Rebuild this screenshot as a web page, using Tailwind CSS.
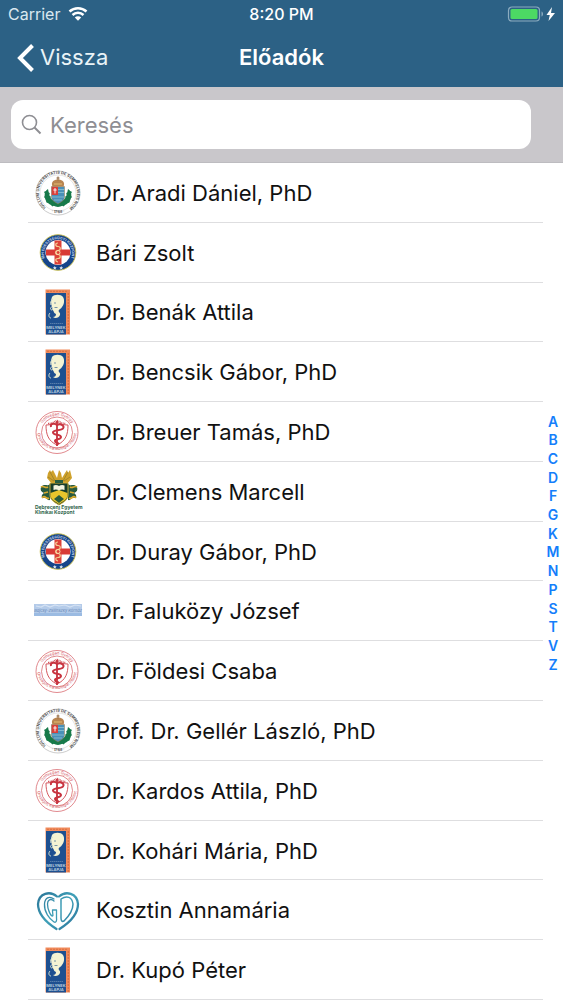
<!DOCTYPE html>
<html lang="hu">
<head>
<meta charset="utf-8">
<meta name="viewport" content="width=device-width, initial-scale=1">
<title>Előadók</title>
<script src="https://cdn.jsdelivr.net/npm/@tailwindcss/browser@4"></script>
</head>
<body class="flex min-h-screen flex-col bg-white font-['Inter','Liberation_Sans',sans-serif] text-[#111]">

<!-- Shared institution logos -->
<svg class="absolute size-0" aria-hidden="true">
  <defs>
    <path id="ring-outer" d="M18.500 45A19 19 0 1 1 41.500 45"/>
    <path id="ring-foot" d="M19 47A20.500 20.500 0 0 0 41 47"/>
    <path id="ring-blue" d="M17.500 36.500A14 14 0 1 1 42.500 36.500"/>
    <path id="ring-red-top" d="M11.500 30A17.500 17.500 0 0 1 46.500 30"/>
    <path id="ring-red-bottom" d="M9 27A20 20 0 0 0 49 27"/>
    <linearGradient id="heart-fill" gradientUnits="userSpaceOnUse" x1="10" y1="10" x2="50" y2="50">
      <stop offset="0" stop-color="#2a7396"/><stop offset=".5" stop-color="#3fa0b8"/><stop offset="1" stop-color="#2a6f98"/>
    </linearGradient>
  </defs>

  <symbol id="university" viewBox="0 0 60 60">
    <circle cx="30" cy="30" r="22" fill="#fff" stroke="#aaa" stroke-width=".6"/>
    <circle cx="30" cy="30" r="18" fill="none" stroke="#bbb" stroke-width=".4"/>
    <text font-size="4" font-weight="700" fill="#555"><textPath href="#ring-outer" startOffset="50%" text-anchor="middle">SIGILLUM UNIVERSITATIS DE SEMMELWEIS NOM.</textPath></text>
    <text font-size="4" font-weight="700" fill="#555"><textPath href="#ring-foot" startOffset="50%" text-anchor="middle">· 1769 ·</textPath></text>
    <path d="M20 26c-5 3-4 11 0 14 3 3 7 3 10 4 3-1 7-1 10-4 4-3 5-11 0-14-1 5-2 10-5 11-2 2-8 2-10 0-3-1-4-6-5-11z" fill="#177a4a"/>
    <path d="M16.500 29l5 2M16.500 34l6 0M18.500 39l5-2M24 43l3-4M43.500 29l-5 2M43.500 34l-6 0M41.500 39l-5-2M36 43l-3-4" stroke="#177a4a" stroke-width="2"/>
    <path d="M23.500 23.500h13v10.500c0 4-4 5-6.500 7-2.500-2-6.500-3-6.500-7z" fill="#4a90b8" stroke="#a47a45" stroke-width=".5"/>
    <path d="M23.700 23.700H30v8.300h-6.300z" fill="#d8403a"/>
    <path d="M27 25v5.500M25.300 27h3.400" stroke="#fff" stroke-width=".9"/>
    <path d="M30 26.500h6.300M30 29.500h6.300M24 34h12M26 37h8" stroke="#86bdd2" stroke-width=".9"/>
    <path d="M24.500 23.500c-2-4.500 1.500-7 5.500-7s7.500 2.500 5.500 7z" fill="#b98550"/>
    <path d="M30 13.500v4M28.500 15h3" stroke="#8f643a" stroke-width="1"/>
    <path d="M26 21h8" stroke="#e4bd72" stroke-width="1"/>
  </symbol>

  <symbol id="military" viewBox="0 0 60 60">
    <circle cx="30" cy="29.500" r="17.800" fill="#16458a" stroke="#c9bd4a" stroke-width=".9"/>
    <circle cx="30" cy="29.500" r="12.500" fill="#fff"/>
    <path d="M18 26.500h24v6H18z" fill="#d83a36"/>
    <path d="M26.500 17.500h7v24h-7z" fill="#dc4138"/>
    <path d="M30 20c-3 0-3 3.500 0 3.500s3 4 0 4-3 4 0 4 3 4 0 4-3 3 0 3.500" fill="none" stroke="#f4cf94" stroke-width="1.200"/>
    <circle cx="30" cy="29.500" r="2" fill="none" stroke="#f8dfae" stroke-width=".9"/>
    <text font-size="3.600" font-weight="700" fill="#c5d4e8"><textPath href="#ring-blue" startOffset="50%" text-anchor="middle">MH EGÉSZSÉGÜGYI KÖZPONT</textPath></text>
    <path d="M26.800 43l.6 1.200 1.300.1-1 1 .3 1.300-1.200-.7-1.200.7.3-1.300-1-1 1.300-.1zM33.200 43l.6 1.200 1.300.1-1 1 .3 1.300-1.200-.7-1.200.7.3-1.300-1-1 1.300-.1z" fill="#dce7f5"/>
  </symbol>

  <symbol id="society" viewBox="0 0 60 60">
    <path d="M17.500 6.500h24.500v45H17.500z" fill="#f28b5c"/>
    <path d="M18 10H38v41.500H18z" fill="#1e5090"/>
    <path d="M40.200 10v41" stroke="#d2693d" stroke-width="1" stroke-dasharray="2 1"/>
    <path d="M19 8.300h21" stroke="#d2693d" stroke-width=".8" stroke-dasharray="2 1"/>
    <path d="M24 14c2-3 9-3 11 0 2 3 1 8-1 10-1 2-3 2-3.500 4 1 2 2 2 1.500 4-1 3-5 4-7 2 2 0 3-1 3-3-3-1-1.500-3-3.500-4-1-1 .5-2-.5-3-1-3-1.500-7 0-10z" fill="#f4f3d3"/>
    <path d="M25 16c-2 1-3 4-2 6M24 24c-2 0-2 3 0 3M22 30c-2 2-1 5 1 5" stroke="#d8e2d0" stroke-width="1" fill="none"/>
    <path d="M26 20h2M26.500 24.500h3" stroke="#6688a0" stroke-width=".9"/>
    <path d="M22 40.500h13" stroke="#6e91b8" stroke-width=".7" stroke-dasharray="1.500 .5"/>
    <text x="28" y="45.500" font-size="4" font-weight="700" text-anchor="middle" fill="#b7cbdc">MELYNEK</text>
    <text x="28" y="49.500" font-size="4" font-weight="700" text-anchor="middle" fill="#b7cbdc">ALAPJA</text>
  </symbol>

  <symbol id="cardiology" viewBox="0 0 60 60">
    <g fill="none" stroke="#d4575f">
      <circle cx="29" cy="29.500" r="21" stroke-width=".7"/>
      <circle cx="29" cy="29.500" r="15.500" stroke-width=".7"/>
      <path d="M18 22c4 0 8-1 11-3 3 2 7 3 11 3 0 9-2 16-11 20-9-4-11-11-11-20z" stroke-width="1"/>
      <path d="M20 20.500c5 0 6-2 9-3 3 1 4 3 9 3" stroke-width="1.500" stroke-dasharray="1 .6"/>
      <path d="M29 18v25" stroke="#c5303d" stroke-width="1.800"/>
      <path d="M23 24c-1-4 4-4 6-2 4-2 8 1 6 3.500-2 2.500-10 1-10 4s8 1.500 8 4.500-6 1.500-6 4 3 1 4 3" stroke="#c8333f" stroke-width="2"/>
    </g>
    <text font-size="4" fill="#d4575f"><textPath href="#ring-red-top" startOffset="50%" text-anchor="middle">Gottsegen György</textPath></text>
    <text font-size="4" fill="#d4575f"><textPath href="#ring-red-bottom" startOffset="50%" text-anchor="middle">Országos Kardiológiai Intézet</textPath></text>
  </symbol>

  <symbol id="debrecen" viewBox="0 0 60 60">
    <path d="M31 8l2 3 1 5 3-5 2-3 1 3 2-3 1 4 1 4-5 6H24l-5-6 1-5 2-3 1 2 2-2 2 4 2 4z" fill="#cfa12b"/>
    <path d="M22 10l5 9M40 10l-5 9M20 15l6 4M42 15l-6 4" stroke="#8f7a2a" stroke-width=".7"/>
    <path d="M13 25c4-4 6 0 9-3v16c-3 1-3-3-6-2-4 0-2-4 0-5-3-1-4-3-3-6zM49 25c-4-4-6 0-9-3v16c3 1 3-3 6-2 4 0 2-4 0-5 3-1 4-3 3-6z" fill="#285b3f"/>
    <path d="M13 25c3-2 4 2 7 0M14 36c3-4 4 2 7 0M49 25c-3-2-4 2-7 0M48 36c-3-4-4 2-7 0M16 31l4-1M46 31l-4-1" stroke="#d9a92e" stroke-width="1.700" fill="none"/>
    <path d="M22 21h18v12c0 5-4 7-9 10-5-3-9-5-9-10z" fill="#183e2b" stroke="#d9b33d" stroke-width=".9"/>
    <path d="M22.500 31l8.500-3 8.500 3v3c-1 4-4 5-8.500 8-4.500-3-7.500-4-8.500-8z" fill="#e8c52c"/>
    <path d="M26 37l5-4 5 4-5 4z" fill="#285b3f"/>
    <path d="M25.500 23.500c2-1 4-.5 5.500.5 1.500-1 3.500-1.500 5.500-.5v4.500c-2-1-4-.5-5.500.5-1.500-1-3.500-1.500-5.500-.5z" fill="#f3f3df"/>
    <path d="M27 18h8v3h-8z" fill="#275d40"/>
    <text x="7" y="46.500" font-size="5" font-weight="700" fill="#2e634b">Debreceni Egyetem</text>
    <text x="7" y="51.500" font-size="5" font-weight="700" fill="#2e634b">Klinikai Központ</text>
  </symbol>

  <symbol id="banner" viewBox="0 0 60 60">
    <path d="M6 22h48v12H6z" fill="#b4cbe9"/>
    <path d="M6 31h48v3H6z" fill="#9bbbe2"/>
    <path d="M8 24l5 1 4-2 5 2 5-2 4 1 6-1 5 2 5-2 6 1" stroke="#d5e2f3" stroke-width="1.200" fill="none"/>
    <text x="30" y="30" font-size="4" font-style="italic" text-anchor="middle" fill="#6486b5">Bajcsy-Zsilinszky Kórház</text>
  </symbol>

  <symbol id="heart" viewBox="0 0 60 60">
    <g fill="none" stroke="url(#heart-fill)" stroke-linecap="round" stroke-linejoin="round">
      <path d="M29 15.500C22 9.500 11 12 10 23c0 10 9 19 18.500 25" stroke-width="2.300"/>
      <path d="M31 15.500C38 9.500 49 12 50 23c0 10-9 19-18.500 25" stroke-width="2.300"/>
      <path d="M26 18c-5-3.500-9-1-9.500 5-.5 8 5 15 9.500 18 2 1 3-1 2.500-4v-8h-4c0 4 1 6 0 6-2 0-5-7-5-12 0-4 3-6 6.500-3" stroke-width="1.300"/>
      <path d="M33 18c6-4 11-2 12 5 0 7-4 12-9 17-2 1-3 0-3-3z" stroke-width="1.500"/>
    </g>
  </symbol>
</svg>

<header class="bg-[#2c6185] text-white">
  <div class="grid h-7 grid-cols-3 items-center px-2 text-base">
    <div class="flex items-center gap-2 text-[#d9e8f0]">
      <span>Carrier</span>
      <svg class="h-4 w-5" viewBox="0 0 20 16" aria-label="Wi-Fi" role="img"><g fill="none" stroke="#fff" stroke-width="2.500"><path d="M1.500 5.500a12.500 12.500 0 0 1 17 0M4.500 9a8 8 0 0 1 11 0"/></g><path d="M6.800 11.500a4.500 4.500 0 0 1 6.400 0L10 14.800z" fill="#fff"/></svg>
    </div>
    <time class="text-center font-medium whitespace-nowrap">8:20 PM</time>
    <svg class="h-4 w-12 justify-self-end" viewBox="0 0 48 16" aria-label="Akkumulátor, töltés alatt" role="img">
      <rect x="1.500" y="1" width="31" height="14" rx="3.500" fill="none" stroke="#8cacc0" stroke-width="1.200"/>
      <rect x="3.500" y="3" width="27" height="10" rx="1.500" fill="#4cd964"/>
      <path d="M34.500 5.500c2 .5 2 4.500 0 5z" fill="#8cacc0"/>
      <path d="M45 1L39.500 9h3.300l-1.300 6L48 7h-4z" fill="#fff"/>
    </svg>
  </div>
  <div class="grid h-[59px] grid-cols-3 items-center px-4">
    <a href="#" class="flex items-center gap-1 text-[22px] text-[#e9f3f7]">
      <svg class="h-8 w-5" viewBox="0 0 20 32" aria-hidden="true"><path d="M16.500 3.500L4 16l12.500 12.500" fill="none" stroke="#fff" stroke-width="4"/></svg>
      Vissza
    </a>
    <h1 class="text-center text-[22px] font-semibold">Előadók</h1>
  </div>
</header>

<form role="search" class="h-[76px] border-b border-[#bdbcc0] bg-[#c9c7cb] pt-[13px] pr-8 pl-[11px]">
  <div class="flex h-[49px] items-center gap-2 rounded-xl bg-white px-[10px]">
    <svg class="size-[21px] shrink-0" viewBox="0 0 21 21" aria-hidden="true"><g fill="none" stroke="#8e8e93" stroke-width="1.600"><circle cx="8.500" cy="8.500" r="7"/><path d="M13.500 13.500l6 6" stroke-width="2"/></g></svg>
    <input type="search" aria-label="Keresés" placeholder="Keresés" class="h-10 min-w-0 flex-1 bg-transparent text-[22px] outline-none placeholder:text-[#8e8e93]">
  </div>
</form>

<main class="flex flex-1">
  <ul class="ml-7 grid min-w-0 flex-1 auto-rows-fr text-[22px]">
    <li class="flex min-h-[59px] items-center gap-2 border-b border-[#dedee0] pt-0.5"><svg class="-my-1 size-[60px] shrink-0" aria-hidden="true"><use href="#university"/></svg>Dr. Aradi Dániel, PhD</li>
    <li class="flex min-h-[59px] items-center gap-2 border-b border-[#dedee0] pt-0.5"><svg class="-my-1 size-[60px] shrink-0" aria-hidden="true"><use href="#military"/></svg>Bári Zsolt</li>
    <li class="flex min-h-[59px] items-center gap-2 border-b border-[#dedee0] pt-0.5"><svg class="-my-1 size-[60px] shrink-0" aria-hidden="true"><use href="#society"/></svg>Dr. Benák Attila</li>
    <li class="flex min-h-[59px] items-center gap-2 border-b border-[#dedee0] pt-0.5"><svg class="-my-1 size-[60px] shrink-0" aria-hidden="true"><use href="#society"/></svg>Dr. Bencsik Gábor, PhD</li>
    <li class="flex min-h-[59px] items-center gap-2 border-b border-[#dedee0] pt-0.5"><svg class="-my-1 size-[60px] shrink-0" aria-hidden="true"><use href="#cardiology"/></svg>Dr. Breuer Tamás, PhD</li>
    <li class="flex min-h-[59px] items-center gap-2 border-b border-[#dedee0] pt-0.5"><svg class="-my-1 size-[60px] shrink-0" aria-hidden="true"><use href="#debrecen"/></svg>Dr. Clemens Marcell</li>
    <li class="flex min-h-[59px] items-center gap-2 border-b border-[#dedee0] pt-0.5"><svg class="-my-1 size-[60px] shrink-0" aria-hidden="true"><use href="#military"/></svg>Dr. Duray Gábor, PhD</li>
    <li class="flex min-h-[59px] items-center gap-2 border-b border-[#dedee0] pt-0.5"><svg class="-my-1 size-[60px] shrink-0" aria-hidden="true"><use href="#banner"/></svg>Dr. Faluközy József</li>
    <li class="flex min-h-[59px] items-center gap-2 border-b border-[#dedee0] pt-0.5"><svg class="-my-1 size-[60px] shrink-0" aria-hidden="true"><use href="#cardiology"/></svg>Dr. Földesi Csaba</li>
    <li class="flex min-h-[59px] items-center gap-2 border-b border-[#dedee0] pt-0.5"><svg class="-my-1 size-[60px] shrink-0" aria-hidden="true"><use href="#university"/></svg>Prof. Dr. Gellér László, PhD</li>
    <li class="flex min-h-[59px] items-center gap-2 border-b border-[#dedee0] pt-0.5"><svg class="-my-1 size-[60px] shrink-0" aria-hidden="true"><use href="#cardiology"/></svg>Dr. Kardos Attila, PhD</li>
    <li class="flex min-h-[59px] items-center gap-2 border-b border-[#dedee0] pt-0.5"><svg class="-my-1 size-[60px] shrink-0" aria-hidden="true"><use href="#society"/></svg>Dr. Kohári Mária, PhD</li>
    <li class="flex min-h-[59px] items-center gap-2 border-b border-[#dedee0] pt-0.5"><svg class="-my-1 size-[60px] shrink-0" aria-hidden="true"><use href="#heart"/></svg>Kosztin Annamária</li>
    <li class="flex min-h-[59px] items-center gap-2 border-b border-[#dedee0] pt-0.5"><svg class="-my-1 size-[60px] shrink-0" aria-hidden="true"><use href="#society"/></svg>Dr. Kupó Péter</li>
  </ul>
  <nav aria-label="Betűrendes mutató" class="mb-[76px] grid h-[262px] w-5 auto-rows-fr self-center text-center text-sm leading-[18px] font-semibold text-[#147efb]">
    <a href="#">A</a>
    <a href="#">B</a>
    <a href="#">C</a>
    <a href="#">D</a>
    <a href="#">F</a>
    <a href="#">G</a>
    <a href="#">K</a>
    <a href="#">M</a>
    <a href="#">N</a>
    <a href="#">P</a>
    <a href="#">S</a>
    <a href="#">T</a>
    <a href="#">V</a>
    <a href="#">Z</a>
  </nav>
</main>
</body>
</html>
